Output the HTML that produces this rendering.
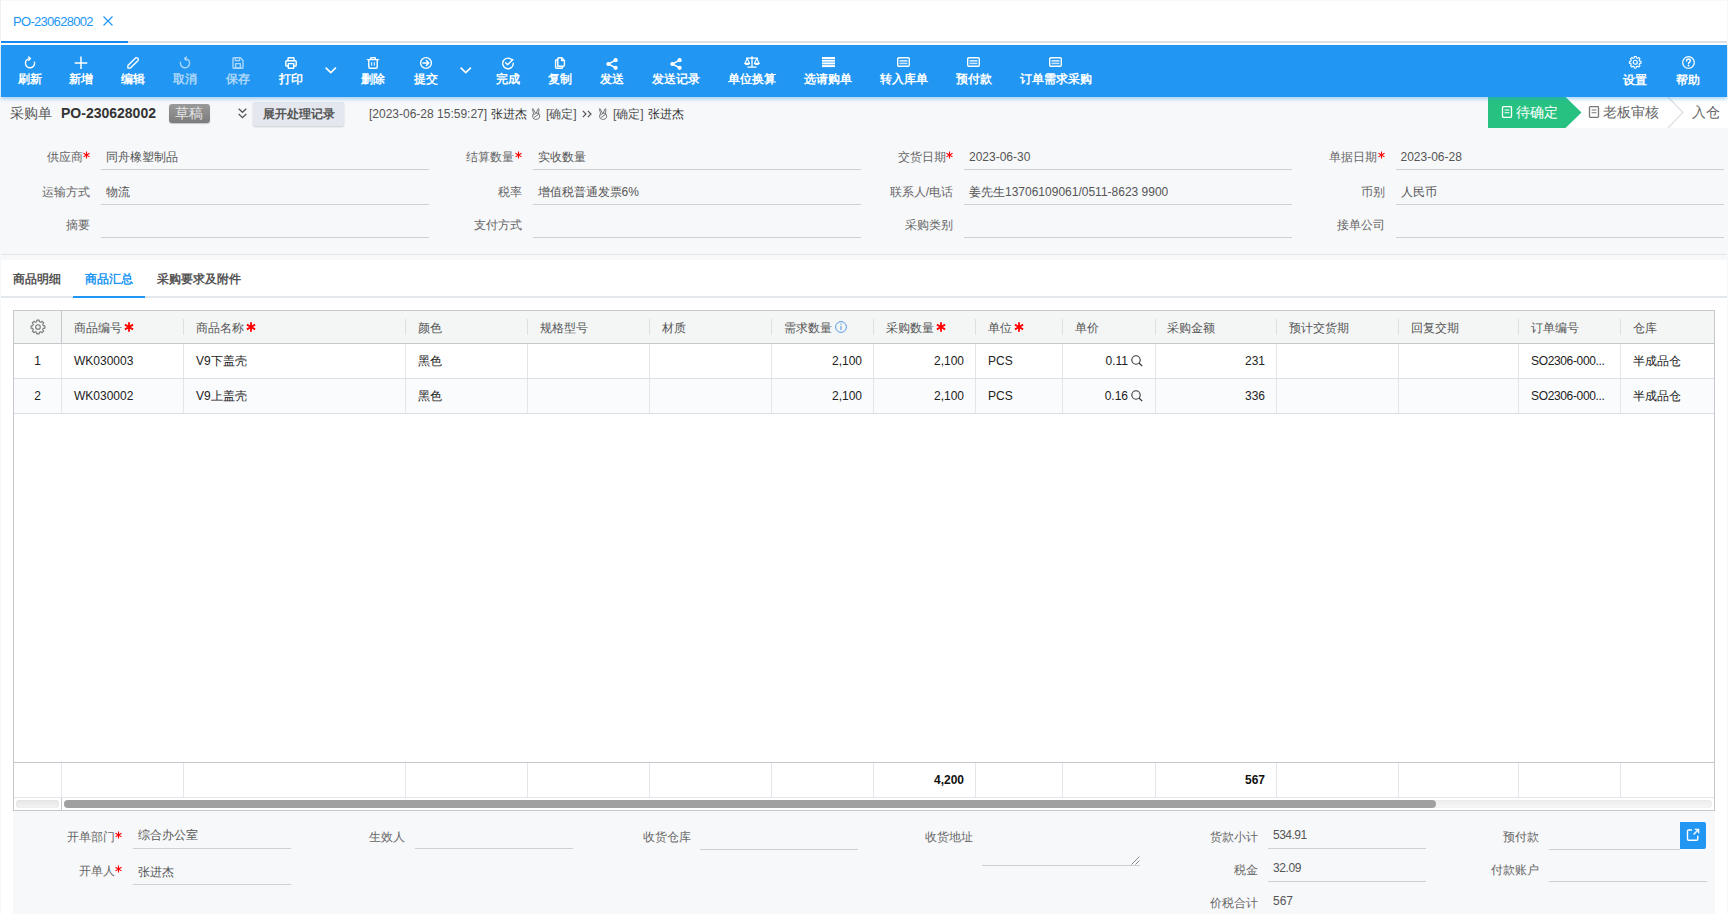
<!DOCTYPE html>
<html><head><meta charset="utf-8">
<style>
*{box-sizing:border-box}
html,body{margin:0;padding:0}
body{width:1728px;height:914px;overflow:hidden;background:#fff;font-family:"Liberation Sans",sans-serif;position:relative;color:#333}
.a{position:absolute;white-space:nowrap}
.t12{font-size:12px;line-height:12px}
.t14{font-size:14px;line-height:14px}
/* toolbar */
#tb{position:absolute;z-index:5;left:1px;top:45px;width:1726px;height:52px;background:#2196f3;box-shadow:0 2px 4px rgba(33,150,243,.4)}
.btn{position:absolute;top:0;height:52px;width:0}
.btn svg{position:absolute;left:-7px;top:11px;width:14px;height:14px;overflow:visible}
.btn span{position:absolute;top:28px;left:-50px;width:100px;text-align:center;font-size:12px;line-height:12px;color:#fff;font-weight:bold}
.dim{opacity:.62}
.st{display:inline-block;vertical-align:top;margin-left:0.5px}
</style></head>
<body>
<!-- tab bar -->
<div class="a" style="left:0;top:0;width:1px;height:41px;background:#eef0f3"></div>
<div class="a" style="left:13px;top:15px;font-size:13px;line-height:13px;letter-spacing:-0.7px;color:#2196f3">PO-230628002</div>
<svg class="a" style="left:103px;top:16px" width="10" height="10" viewBox="0 0 10 10"><path d="M0.5 0.5 L9.5 9.5 M9.5 0.5 L0.5 9.5" stroke="#2196f3" stroke-width="1.2" fill="none"/></svg>
<div class="a" style="left:1px;top:41px;width:1726px;height:2px;background:#dcdfe4"></div>
<div class="a" style="left:1px;top:41px;width:127px;height:2px;background:#1589f0"></div>

<!-- toolbar -->
<div id="tb">
<div class="btn " style="left:28.9px"><svg style="left:-6.0px;top:12.0px;width:12px;height:12px" viewBox="0 0 12 12"><path d="M6 1.6 A4.6 4.6 0 1 0 10.5 5.2" stroke="#fff" fill="none" stroke-width="1.4" stroke-linecap="round" stroke-linejoin="round"/><path d="M4.6 0 L6.4 1.6 L4.8 3.3" stroke="#fff" fill="none" stroke-width="1.4" stroke-linecap="round" stroke-linejoin="round"/></svg><span>刷新</span></div>
<div class="btn " style="left:80.2px"><svg style="left:-6.0px;top:12.0px;width:12px;height:12px" viewBox="0 0 12 12"><path d="M6 -0.4 V12 M-0.3 6 H12.3" stroke="#fff" stroke-width="1.5" fill="none"/></svg><span>新增</span></div>
<div class="btn " style="left:132.3px"><svg style="left:-6.0px;top:12.0px;width:12px;height:12px" viewBox="0 0 12 12"><path d="M8.6 0.9 Q9.6 0.2 10.8 1.2 Q11.8 2.4 11.1 3.4 L3.4 11.1 L0.9 11.1 L0.9 8.6 Z" stroke="#fff" fill="none" stroke-width="1.4" stroke-linecap="round" stroke-linejoin="round"/></svg><span>编辑</span></div>
<div class="btn dim" style="left:184.3px"><svg style="left:-6.0px;top:12.0px;width:12px;height:12px" viewBox="0 0 12 12"><path d="M6 1.6 A4.6 4.6 0 1 1 1.5 5.2" stroke="#fff" fill="none" stroke-width="1.4" stroke-linecap="round" stroke-linejoin="round"/><path d="M7.4 0 L5.6 1.6 L7.2 3.3" stroke="#fff" fill="none" stroke-width="1.4" stroke-linecap="round" stroke-linejoin="round"/></svg><span>取消</span></div>
<div class="btn dim" style="left:236.5px"><svg style="left:-6.0px;top:12.0px;width:12px;height:12px" viewBox="0 0 12 12"><path d="M1 1.6 Q1 0.8 1.8 0.8 H8.4 L11 3.4 V10.4 Q11 11.2 10.2 11.2 H1.8 Q1 11.2 1 10.4 Z" stroke="#fff" fill="none" stroke-width="1.4" stroke-linecap="round" stroke-linejoin="round"/><path d="M3.4 1 V3.6 H7.6 V1" stroke="#fff" fill="none" stroke-width="1.4" stroke-linecap="round" stroke-linejoin="round" stroke-width="1.1"/><rect x="3.6" y="6.6" width="4.8" height="4.4" stroke="#fff" fill="none" stroke-width="1.4" stroke-linecap="round" stroke-linejoin="round" stroke-width="1.2"/></svg><span>保存</span></div>
<div class="btn " style="left:289.7px"><svg style="left:-6.0px;top:12.0px;width:12px;height:12px" viewBox="0 0 12 12"><path d="M3 3.6 V1.4 Q3 0.8 3.6 0.8 H8.4 Q9 0.8 9 1.4 V3.6" stroke="#fff" fill="none" stroke-width="1.4" stroke-linecap="round" stroke-linejoin="round"/><path d="M3 9 H1.6 Q0.8 9 0.8 8.2 V4.6 Q0.8 3.7 1.7 3.7 H10.3 Q11.2 3.7 11.2 4.6 V8.2 Q11.2 9 10.4 9 H9" stroke="#fff" fill="none" stroke-width="1.4" stroke-linecap="round" stroke-linejoin="round"/><rect x="3.3" y="6.6" width="5.4" height="4.6" stroke="#fff" fill="none" stroke-width="1.4" stroke-linecap="round" stroke-linejoin="round"/></svg><span>打印</span></div>
<div class="btn " style="left:329.3px"><svg style="left:-5.75px;top:14.75px;width:11.5px;height:6.5px;top:21.5px" viewBox="0 0 11.5 6.5"><path d="M0.6 0.7 L5.75 5.6 L10.9 0.7" stroke="#fff" stroke-width="1.6" fill="none"/></svg></div>
<div class="btn " style="left:371.7px"><svg style="left:-6.0px;top:12.0px;width:12px;height:12px" viewBox="0 0 12 12"><path d="M0.4 2.6 H11.6" stroke="#fff" fill="none" stroke-width="1.4" stroke-linecap="round" stroke-linejoin="round"/><path d="M3.6 2.4 V1.4 Q3.6 0.8 4.2 0.8 H7.8 Q8.4 0.8 8.4 1.4 V2.4" stroke="#fff" fill="none" stroke-width="1.4" stroke-linecap="round" stroke-linejoin="round"/><path d="M1.8 2.8 V10 Q1.8 11.2 3 11.2 H9 Q10.2 11.2 10.2 10 V2.8" stroke="#fff" fill="none" stroke-width="1.4" stroke-linecap="round" stroke-linejoin="round"/><path d="M4.7 5.2 V8.6 M7.3 5.2 V8.6" stroke="#fff" fill="none" stroke-width="1"/></svg><span>删除</span></div>
<div class="btn " style="left:425.2px"><svg style="left:-6.0px;top:12.0px;width:12px;height:12px" viewBox="0 0 12 12"><circle cx="6" cy="6" r="5.4" stroke="#fff" fill="none" stroke-width="1.4" stroke-linecap="round" stroke-linejoin="round"/><path d="M3 6 H8.6 M6.4 3.6 L8.8 6 L6.4 8.4" stroke="#fff" fill="none" stroke-width="1.4" stroke-linecap="round" stroke-linejoin="round"/></svg><span>提交</span></div>
<div class="btn " style="left:464.5px"><svg style="left:-5.75px;top:14.75px;width:11.5px;height:6.5px;top:21.5px" viewBox="0 0 11.5 6.5"><path d="M0.6 0.7 L5.75 5.6 L10.9 0.7" stroke="#fff" stroke-width="1.6" fill="none"/></svg></div>
<div class="btn " style="left:507px"><svg style="left:-6.0px;top:12.0px;width:12px;height:12px" viewBox="0 0 12 12"><path d="M10.2 3.2 A5.3 5.3 0 1 0 11.3 6.3" stroke="#fff" fill="none" stroke-width="1.4" stroke-linecap="round" stroke-linejoin="round"/><path d="M3.6 5.8 L5.6 7.8 L10.8 2.4" stroke="#fff" fill="none" stroke-width="1.4" stroke-linecap="round" stroke-linejoin="round"/></svg><span>完成</span></div>
<div class="btn " style="left:558.7px"><svg style="left:-6.0px;top:12.0px;width:12px;height:12px" viewBox="0 0 12 12"><path d="M3.8 9.2 V2 Q3.8 0.8 5 0.8 H7.8 L10.4 3.4 V8 Q10.4 9.2 9.2 9.2 Z" stroke="#fff" fill="none" stroke-width="1.4" stroke-linecap="round" stroke-linejoin="round"/><path d="M7.6 1 V3.6 H10.2" stroke="#fff" fill="none" stroke-width="1.4" stroke-linecap="round" stroke-linejoin="round" stroke-width="1.1"/><path d="M3.6 2.8 H2.6 Q1.6 2.8 1.6 3.8 V10.2 Q1.6 11.2 2.6 11.2 H7.6 Q8.6 11.2 8.6 10.2 V9.4" stroke="#fff" fill="none" stroke-width="1.4" stroke-linecap="round" stroke-linejoin="round"/></svg><span>复制</span></div>
<div class="btn " style="left:611px"><svg style="left:-6.0px;top:12.0px;width:12px;height:12px;top:12.5px" viewBox="0 0 12 12"><path d="M9.6 2.2 L2.4 6 L9.6 9.8" stroke="#fff" stroke-width="1.5" fill="none"/><circle cx="9.6" cy="2.2" r="2.1" fill="#fff"/><circle cx="2.4" cy="6" r="2.1" fill="#fff"/><circle cx="9.6" cy="9.8" r="2.1" fill="#fff"/></svg><span>发送</span></div>
<div class="btn " style="left:675px"><svg style="left:-6.0px;top:12.0px;width:12px;height:12px;top:12.5px" viewBox="0 0 12 12"><path d="M9.6 2.2 L2.4 6 L9.6 9.8" stroke="#fff" stroke-width="1.5" fill="none"/><circle cx="9.6" cy="2.2" r="2.1" fill="#fff"/><circle cx="2.4" cy="6" r="2.1" fill="#fff"/><circle cx="9.6" cy="9.8" r="2.1" fill="#fff"/></svg><span>发送记录</span></div>
<div class="btn " style="left:751px"><svg style="left:-8.0px;top:11px;width:16px;height:12px" viewBox="0 0 16 12"><path d="M8 0.8 V11.2 M3.5 11.2 H12.5 M2 2.2 H14" stroke="#fff" stroke-width="1.3" fill="none"/><path d="M3.2 2.4 L0.8 7.4 H5.6 Z M12.8 2.4 L10.4 7.4 H15.2 Z" stroke="#fff" stroke-width="1.1" fill="none" stroke-linejoin="round"/><path d="M0.6 7.4 Q3.2 10 5.8 7.4 M10.2 7.4 Q12.8 10 15.4 7.4" stroke="#fff" stroke-width="1.3" fill="#fff"/><circle cx="8" cy="1.4" r="1" fill="#fff"/></svg><span>单位换算</span></div>
<div class="btn " style="left:827px"><svg style="left:-6.5px;top:13.0px;width:13px;height:10px;top:12px" viewBox="0 0 13 10"><rect x="0" y="0" width="13" height="2" fill="#fff"/><rect x="0" y="2.7" width="13" height="2" fill="#fff"/><rect x="0" y="5.4" width="13" height="2" fill="#fff"/><rect x="0" y="8.1" width="13" height="2" fill="#fff"/></svg><span>选请购单</span></div>
<div class="btn " style="left:902.8px"><svg style="left:-6.5px;top:13.0px;width:13px;height:10px;top:12px" viewBox="0 0 13 10"><rect x="0.7" y="0.7" width="11.6" height="8.6" rx="1.2" stroke="#fff" stroke-width="1.4" fill="none"/><rect x="2.5" y="3.2" width="8" height="1.3" fill="#fff"/><rect x="2.5" y="5.6" width="8" height="1.6" fill="#fff" opacity=".75"/></svg><span>转入库单</span></div>
<div class="btn " style="left:972.9px"><svg style="left:-6.5px;top:13.0px;width:13px;height:10px;top:12px" viewBox="0 0 13 10"><rect x="0.7" y="0.7" width="11.6" height="8.6" rx="1.2" stroke="#fff" stroke-width="1.4" fill="none"/><rect x="2.5" y="3.2" width="8" height="1.3" fill="#fff"/><rect x="2.5" y="5.6" width="8" height="1.6" fill="#fff" opacity=".75"/></svg><span>预付款</span></div>
<div class="btn " style="left:1054.6px"><svg style="left:-6.5px;top:13.0px;width:13px;height:10px;top:12px" viewBox="0 0 13 10"><rect x="0.7" y="0.7" width="11.6" height="8.6" rx="1.2" stroke="#fff" stroke-width="1.4" fill="none"/><rect x="2.5" y="3.2" width="8" height="1.3" fill="#fff"/><rect x="2.5" y="5.6" width="8" height="1.6" fill="#fff" opacity=".75"/></svg><span>订单需求采购</span></div>
<div class="btn " style="left:1634.2px"><svg style="left:-6.25px;top:11.2px;width:12.5px;height:12.5px" viewBox="0 0 12.5 12.5"><path d="M5.10 1.90 L5.28 0.43 L7.22 0.43 L7.40 1.90 L8.51 2.36 L9.68 1.45 L11.05 2.82 L10.14 3.99 L10.60 5.10 L12.07 5.28 L12.07 7.22 L10.60 7.40 L10.14 8.51 L11.05 9.68 L9.68 11.05 L8.51 10.14 L7.40 10.60 L7.22 12.07 L5.28 12.07 L5.10 10.60 L3.99 10.14 L2.82 11.05 L1.45 9.68 L2.36 8.51 L1.90 7.40 L0.43 7.22 L0.43 5.28 L1.90 5.10 L2.36 3.99 L1.45 2.82 L2.82 1.45 L3.99 2.36 Z" stroke="#fff" stroke-width="1.1" fill="none" stroke-linejoin="round"/><circle cx="6.25" cy="6.25" r="2" stroke="#fff" stroke-width="1.2" fill="none"/></svg><span style="top:29px">设置</span></div>
<div class="btn " style="left:1687.3px"><svg style="left:-6.5px;top:10.5px;width:13px;height:13px" viewBox="0 0 13 13"><circle cx="6.5" cy="6.5" r="5.8" stroke="#fff" stroke-width="1.3" fill="none"/><path d="M4.6 5 Q4.6 3.1 6.5 3.1 Q8.4 3.1 8.4 4.8 Q8.4 5.9 7.3 6.4 Q6.5 6.8 6.5 7.8" stroke="#fff" stroke-width="1.5" fill="none" stroke-linecap="round"/><circle cx="6.5" cy="9.7" r="0.9" fill="#fff"/></svg><span style="top:29px">帮助</span></div>
</div>

<div class="a" style="left:0;top:0;width:1728px;height:914px;background:#f7f8fa;z-index:-2"></div>
<div class="a" style="left:1px;top:1px;width:1726px;height:44px;background:#fff;z-index:-1"></div>
<div class="a" style="left:1px;top:260px;width:1726px;height:654px;background:#fff;z-index:-1"></div>
<div class="a t14" style="left:10px;top:106px;color:#555">采购单</div>
<div class="a t14" style="left:61px;top:106px;color:#333;font-weight:bold">PO-230628002</div>
<div class="a" style="left:169px;top:104px;width:41px;height:19px;border-radius:3px;background:linear-gradient(#9a9a9a,#7c7c7c);box-shadow:0 1px 1px rgba(0,0,0,.2)"></div>
<div class="a t14" style="left:175px;top:106px;color:#e6e6e6">草稿</div>
<svg class="a" style="left:238px;top:108px" width="9" height="11" viewBox="0 0 9 11"><path d="M0.7 0.8 L4.5 4.3 L8.3 0.8 M0.7 6 L4.5 9.6 L8.3 6" stroke="#555" stroke-width="1.3" fill="none"/></svg>
<div class="a" style="left:253px;top:102px;width:91px;height:24px;border-radius:2px;background:#e4e7ed;box-shadow:0 1px 2px rgba(0,0,0,.18)"></div>
<div class="a t12" style="left:263px;top:108px;color:#555;font-weight:bold">展开处理记录</div>
<div class="a t12" style="left:369px;top:108px;color:#555">[2023-06-28 15:59:27]</div>
<div class="a t12" style="left:491px;top:108px;color:#333">张进杰</div>
<svg class="a" style="left:531px;top:108px" width="10" height="12" viewBox="0 0 10 12"><path d="M2.6 5.4 L1.4 1.2 Q1.4 0.5 2.1 0.8 L4.4 5 M5.4 4.8 L7 0.9 Q7.6 0.4 7.9 1.1 L7.6 5.6 M2.2 5.8 Q0.6 8.6 2.4 10.6 Q4.6 12.2 7.4 10.8 Q9.4 9.2 8.4 6.6 Q7.6 5 5.6 5.2 Q3.6 5.4 2.4 7.2 M3.4 9.2 L7.6 6.4" stroke="#6a6a6a" stroke-width="0.9" fill="none" stroke-linecap="round" stroke-linejoin="round"/></svg>
<div class="a t12" style="left:546px;top:108px;color:#555">[确定]</div>
<svg class="a" style="left:582px;top:110px" width="10" height="8" viewBox="0 0 10 8"><path d="M0.8 0.8 L4 4 L0.8 7.2 M5.8 0.8 L9 4 L5.8 7.2" stroke="#555" stroke-width="1.2" fill="none"/></svg>
<svg class="a" style="left:598px;top:108px" width="10" height="12" viewBox="0 0 10 12"><path d="M2.6 5.4 L1.4 1.2 Q1.4 0.5 2.1 0.8 L4.4 5 M5.4 4.8 L7 0.9 Q7.6 0.4 7.9 1.1 L7.6 5.6 M2.2 5.8 Q0.6 8.6 2.4 10.6 Q4.6 12.2 7.4 10.8 Q9.4 9.2 8.4 6.6 Q7.6 5 5.6 5.2 Q3.6 5.4 2.4 7.2 M3.4 9.2 L7.6 6.4" stroke="#6a6a6a" stroke-width="0.9" fill="none" stroke-linecap="round" stroke-linejoin="round"/></svg>
<div class="a t12" style="left:613px;top:108px;color:#555">[确定]</div>
<div class="a t12" style="left:648px;top:108px;color:#333">张进杰</div>
<div class="a" style="left:1565px;top:97px;width:163px;height:31px;background:#fff"></div>
<svg class="a" style="left:1488px;top:97px" width="94" height="31" viewBox="0 0 94 31"><path d="M0 0 H77.5 L93.5 15.5 L77.5 31 H0 Z" fill="#27c281"/></svg>
<svg class="a" style="left:1501px;top:106px" width="12" height="12" viewBox="0 0 12 12"><rect x="1.5" y="0.7" width="9" height="10.6" rx="0.8" stroke="#fff" stroke-width="1.3" fill="none"/><path d="M3.6 4 H8.4 M3.6 6.8 H8.4" stroke="#fff" stroke-width="1.1"/></svg>
<div class="a t14" style="left:1516px;top:105px;color:#fff">待确定</div>
<svg class="a" style="left:1588px;top:106px" width="12" height="12" viewBox="0 0 12 12"><rect x="1.5" y="0.7" width="9" height="10.6" rx="0.8" stroke="#777" stroke-width="1.3" fill="none"/><path d="M3.6 4 H8.4 M3.6 6.8 H8.4" stroke="#777" stroke-width="1.1"/></svg>
<div class="a t14" style="left:1603px;top:105px;color:#666">老板审核</div>
<svg class="a" style="left:1667px;top:97px" width="18" height="31" viewBox="0 0 18 31"><path d="M1 0 L16 15.5 L1 31" stroke="#dcdfe6" stroke-width="1.2" fill="none"/></svg>
<div class="a t14" style="left:1692px;top:105px;color:#666">入仓</div>
<div class="a t12" style="left:-199px;width:289px;text-align:right;top:151px;color:#666">供应商<svg class="st" width="7" height="12" viewBox="0 0 7 12"><path d="M3.5 0.6 V7.6 M0.5 2.3 L6.5 5.9 M0.5 5.9 L6.5 2.3" stroke="#f00" stroke-width="1.1" fill="none"/></svg></div>
<div class="a" style="left:101px;top:169px;width:328px;height:1px;background:#ccd1d8"></div>
<div class="a t12" style="left:106px;top:151px;color:#555">同舟橡塑制品</div>
<div class="a t12" style="left:-199px;width:289px;text-align:right;top:186px;color:#666">运输方式</div>
<div class="a" style="left:101px;top:204px;width:328px;height:1px;background:#ccd1d8"></div>
<div class="a t12" style="left:106px;top:186px;color:#555">物流</div>
<div class="a t12" style="left:-199px;width:289px;text-align:right;top:219px;color:#666">摘要</div>
<div class="a" style="left:101px;top:237px;width:328px;height:1px;background:#ccd1d8"></div>
<div class="a t12" style="left:232.5px;width:289px;text-align:right;top:151px;color:#666">结算数量<svg class="st" width="7" height="12" viewBox="0 0 7 12"><path d="M3.5 0.6 V7.6 M0.5 2.3 L6.5 5.9 M0.5 5.9 L6.5 2.3" stroke="#f00" stroke-width="1.1" fill="none"/></svg></div>
<div class="a" style="left:532.5px;top:169px;width:328px;height:1px;background:#ccd1d8"></div>
<div class="a t12" style="left:537.5px;top:151px;color:#555">实收数量</div>
<div class="a t12" style="left:232.5px;width:289px;text-align:right;top:186px;color:#666">税率</div>
<div class="a" style="left:532.5px;top:204px;width:328px;height:1px;background:#ccd1d8"></div>
<div class="a t12" style="left:537.5px;top:186px;color:#555">增值税普通发票6%</div>
<div class="a t12" style="left:232.5px;width:289px;text-align:right;top:219px;color:#666">支付方式</div>
<div class="a" style="left:532.5px;top:237px;width:328px;height:1px;background:#ccd1d8"></div>
<div class="a t12" style="left:664px;width:289px;text-align:right;top:151px;color:#666">交货日期<svg class="st" width="7" height="12" viewBox="0 0 7 12"><path d="M3.5 0.6 V7.6 M0.5 2.3 L6.5 5.9 M0.5 5.9 L6.5 2.3" stroke="#f00" stroke-width="1.1" fill="none"/></svg></div>
<div class="a" style="left:964px;top:169px;width:328px;height:1px;background:#ccd1d8"></div>
<div class="a t12" style="left:969px;top:151px;color:#555">2023-06-30</div>
<div class="a t12" style="left:664px;width:289px;text-align:right;top:186px;color:#666">联系人/电话</div>
<div class="a" style="left:964px;top:204px;width:328px;height:1px;background:#ccd1d8"></div>
<div class="a t12" style="left:969px;top:186px;color:#555">姜先生13706109061/0511-8623 9900</div>
<div class="a t12" style="left:664px;width:289px;text-align:right;top:219px;color:#666">采购类别</div>
<div class="a" style="left:964px;top:237px;width:328px;height:1px;background:#ccd1d8"></div>
<div class="a t12" style="left:1095.5px;width:289px;text-align:right;top:151px;color:#666">单据日期<svg class="st" width="7" height="12" viewBox="0 0 7 12"><path d="M3.5 0.6 V7.6 M0.5 2.3 L6.5 5.9 M0.5 5.9 L6.5 2.3" stroke="#f00" stroke-width="1.1" fill="none"/></svg></div>
<div class="a" style="left:1395.5px;top:169px;width:328px;height:1px;background:#ccd1d8"></div>
<div class="a t12" style="left:1400.5px;top:151px;color:#555">2023-06-28</div>
<div class="a t12" style="left:1095.5px;width:289px;text-align:right;top:186px;color:#666">币别</div>
<div class="a" style="left:1395.5px;top:204px;width:328px;height:1px;background:#ccd1d8"></div>
<div class="a t12" style="left:1400.5px;top:186px;color:#555">人民币</div>
<div class="a t12" style="left:1095.5px;width:289px;text-align:right;top:219px;color:#666">接单公司</div>
<div class="a" style="left:1395.5px;top:237px;width:328px;height:1px;background:#ccd1d8"></div>
<div class="a" style="left:1px;top:254px;width:1726px;height:1px;background:#e2e5e9"></div>
<div class="a t12" style="left:13px;top:273px;color:#555;font-weight:bold">商品明细</div>
<div class="a t12" style="left:85px;top:273px;color:#2196f3;font-weight:bold">商品汇总</div>
<div class="a t12" style="left:157px;top:273px;color:#555;font-weight:bold">采购要求及附件</div>
<div class="a" style="left:1px;top:296px;width:1726px;height:2px;background:#e4e7ec"></div>
<div class="a" style="left:73px;top:296px;width:72px;height:2px;background:#2196f3"></div>
<div class="a" style="left:13px;top:310px;width:1702px;height:501px;border:1px solid #c5c9ce;background:#fff"></div>
<div class="a" style="left:14px;top:311px;width:1700px;height:32px;background:#f4f6f6"></div>
<div class="a" style="left:14px;top:343px;width:1700px;height:1px;background:#c5c9ce"></div>
<div class="a" style="left:61px;top:311px;width:1px;height:32px;background:#c5c9ce"></div>
<div class="a" style="left:183px;top:319px;width:1px;height:16px;background:#dcdfe4"></div>
<div class="a" style="left:405px;top:319px;width:1px;height:16px;background:#dcdfe4"></div>
<div class="a" style="left:527px;top:319px;width:1px;height:16px;background:#dcdfe4"></div>
<div class="a" style="left:649px;top:319px;width:1px;height:16px;background:#dcdfe4"></div>
<div class="a" style="left:771px;top:319px;width:1px;height:16px;background:#dcdfe4"></div>
<div class="a" style="left:873px;top:319px;width:1px;height:16px;background:#dcdfe4"></div>
<div class="a" style="left:975px;top:319px;width:1px;height:16px;background:#dcdfe4"></div>
<div class="a" style="left:1062px;top:319px;width:1px;height:16px;background:#dcdfe4"></div>
<div class="a" style="left:1155px;top:319px;width:1px;height:16px;background:#dcdfe4"></div>
<div class="a" style="left:1276px;top:319px;width:1px;height:16px;background:#dcdfe4"></div>
<div class="a" style="left:1398px;top:319px;width:1px;height:16px;background:#dcdfe4"></div>
<div class="a" style="left:1518px;top:319px;width:1px;height:16px;background:#dcdfe4"></div>
<div class="a" style="left:1620px;top:319px;width:1px;height:16px;background:#dcdfe4"></div>
<svg class="a" style="left:30px;top:319px" width="16" height="16" viewBox="0 0 16 16"><path d="M6.62 2.78 L6.85 1.09 L9.15 1.09 L9.38 2.78 L10.71 3.33 L12.07 2.30 L13.70 3.93 L12.67 5.29 L13.22 6.62 L14.91 6.85 L14.91 9.15 L13.22 9.38 L12.67 10.71 L13.70 12.07 L12.07 13.70 L10.71 12.67 L9.38 13.22 L9.15 14.91 L6.85 14.91 L6.62 13.22 L5.29 12.67 L3.93 13.70 L2.30 12.07 L3.33 10.71 L2.78 9.38 L1.09 9.15 L1.09 6.85 L2.78 6.62 L3.33 5.29 L2.30 3.93 L3.93 2.30 L5.29 3.33 Z" stroke="#777" stroke-width="1.1" fill="none" stroke-linejoin="round"/><circle cx="8" cy="8" r="2.3" stroke="#777" stroke-width="1.1" fill="none"/></svg>
<div class="a t12" style="left:74px;top:322px;color:#555">商品编号</div>
<svg class="a" style="left:124px;top:322px" width="10" height="10" viewBox="0 0 10 10"><path d="M5 0.3 V9.7 M0.9 2.6 L9.1 7.4 M0.9 7.4 L9.1 2.6" stroke="#f00" stroke-width="1.8" fill="none"/></svg>
<div class="a t12" style="left:196px;top:322px;color:#555">商品名称</div>
<svg class="a" style="left:246px;top:322px" width="10" height="10" viewBox="0 0 10 10"><path d="M5 0.3 V9.7 M0.9 2.6 L9.1 7.4 M0.9 7.4 L9.1 2.6" stroke="#f00" stroke-width="1.8" fill="none"/></svg>
<div class="a t12" style="left:418px;top:322px;color:#555">颜色</div>
<div class="a t12" style="left:540px;top:322px;color:#555">规格型号</div>
<div class="a t12" style="left:662px;top:322px;color:#555">材质</div>
<div class="a t12" style="left:784px;top:322px;color:#555">需求数量</div>
<div class="a t12" style="left:886px;top:322px;color:#555">采购数量</div>
<svg class="a" style="left:936px;top:322px" width="10" height="10" viewBox="0 0 10 10"><path d="M5 0.3 V9.7 M0.9 2.6 L9.1 7.4 M0.9 7.4 L9.1 2.6" stroke="#f00" stroke-width="1.8" fill="none"/></svg>
<div class="a t12" style="left:988px;top:322px;color:#555">单位</div>
<svg class="a" style="left:1014px;top:322px" width="10" height="10" viewBox="0 0 10 10"><path d="M5 0.3 V9.7 M0.9 2.6 L9.1 7.4 M0.9 7.4 L9.1 2.6" stroke="#f00" stroke-width="1.8" fill="none"/></svg>
<div class="a t12" style="left:1075px;top:322px;color:#555">单价</div>
<div class="a t12" style="left:1167px;top:322px;color:#555">采购金额</div>
<div class="a t12" style="left:1289px;top:322px;color:#555">预计交货期</div>
<div class="a t12" style="left:1411px;top:322px;color:#555">回复交期</div>
<div class="a t12" style="left:1531px;top:322px;color:#555">订单编号</div>
<div class="a t12" style="left:1633px;top:322px;color:#555">仓库</div>
<svg class="a" style="left:835px;top:321px" width="12" height="12" viewBox="0 0 12 12"><circle cx="6" cy="6" r="5.4" stroke="#5a9ae6" stroke-width="1" fill="none"/><path d="M6 5 V9" stroke="#5a9ae6" stroke-width="1.1"/><circle cx="6" cy="3.3" r="0.7" fill="#5a9ae6"/></svg>
<div class="a" style="left:14px;top:378px;width:1700px;height:1px;background:#dcdfe4"></div>
<div class="a" style="left:61px;top:344px;width:1px;height:34px;background:#e3e6ea"></div>
<div class="a" style="left:183px;top:344px;width:1px;height:34px;background:#e3e6ea"></div>
<div class="a" style="left:405px;top:344px;width:1px;height:34px;background:#e3e6ea"></div>
<div class="a" style="left:527px;top:344px;width:1px;height:34px;background:#e3e6ea"></div>
<div class="a" style="left:649px;top:344px;width:1px;height:34px;background:#e3e6ea"></div>
<div class="a" style="left:771px;top:344px;width:1px;height:34px;background:#e3e6ea"></div>
<div class="a" style="left:873px;top:344px;width:1px;height:34px;background:#e3e6ea"></div>
<div class="a" style="left:975px;top:344px;width:1px;height:34px;background:#e3e6ea"></div>
<div class="a" style="left:1062px;top:344px;width:1px;height:34px;background:#e3e6ea"></div>
<div class="a" style="left:1155px;top:344px;width:1px;height:34px;background:#e3e6ea"></div>
<div class="a" style="left:1276px;top:344px;width:1px;height:34px;background:#e3e6ea"></div>
<div class="a" style="left:1398px;top:344px;width:1px;height:34px;background:#e3e6ea"></div>
<div class="a" style="left:1518px;top:344px;width:1px;height:34px;background:#e3e6ea"></div>
<div class="a" style="left:1620px;top:344px;width:1px;height:34px;background:#e3e6ea"></div>
<div class="a" style="left:14px;top:379px;width:1700px;height:34px;background:#fafbfd"></div>
<div class="a" style="left:14px;top:413px;width:1700px;height:1px;background:#dcdfe4"></div>
<div class="a" style="left:61px;top:379px;width:1px;height:34px;background:#e3e6ea"></div>
<div class="a" style="left:183px;top:379px;width:1px;height:34px;background:#e3e6ea"></div>
<div class="a" style="left:405px;top:379px;width:1px;height:34px;background:#e3e6ea"></div>
<div class="a" style="left:527px;top:379px;width:1px;height:34px;background:#e3e6ea"></div>
<div class="a" style="left:649px;top:379px;width:1px;height:34px;background:#e3e6ea"></div>
<div class="a" style="left:771px;top:379px;width:1px;height:34px;background:#e3e6ea"></div>
<div class="a" style="left:873px;top:379px;width:1px;height:34px;background:#e3e6ea"></div>
<div class="a" style="left:975px;top:379px;width:1px;height:34px;background:#e3e6ea"></div>
<div class="a" style="left:1062px;top:379px;width:1px;height:34px;background:#e3e6ea"></div>
<div class="a" style="left:1155px;top:379px;width:1px;height:34px;background:#e3e6ea"></div>
<div class="a" style="left:1276px;top:379px;width:1px;height:34px;background:#e3e6ea"></div>
<div class="a" style="left:1398px;top:379px;width:1px;height:34px;background:#e3e6ea"></div>
<div class="a" style="left:1518px;top:379px;width:1px;height:34px;background:#e3e6ea"></div>
<div class="a" style="left:1620px;top:379px;width:1px;height:34px;background:#e3e6ea"></div>
<div class="a t12" style="left:13px;width:49px;text-align:center;top:355px;color:#222">1</div>
<div class="a t12" style="left:74px;top:355px;color:#222">WK030003</div>
<div class="a t12" style="left:196px;top:355px;color:#222">V9下盖壳</div>
<div class="a t12" style="left:418px;top:355px;color:#222">黑色</div>
<div class="a t12" style="left:700px;width:162px;text-align:right;top:355px;color:#222">2,100</div>
<div class="a t12" style="left:800px;width:164px;text-align:right;top:355px;color:#222">2,100</div>
<div class="a t12" style="left:988px;top:355px;color:#222">PCS</div>
<div class="a t12" style="left:1000px;width:128px;text-align:right;top:355px;color:#222">0.11</div>
<svg class="a" style="left:1131px;top:355px" width="12" height="12" viewBox="0 0 12 12"><circle cx="5" cy="5" r="4.2" stroke="#333" stroke-width="1.1" fill="none"/><path d="M8 8 L11.2 11.2" stroke="#333" stroke-width="1.2"/></svg>
<div class="a t12" style="left:1100px;width:165px;text-align:right;top:355px;color:#222">231</div>
<div class="a t12" style="left:1531px;top:355px;color:#222;letter-spacing:-0.35px">SO2306-000...</div>
<div class="a t12" style="left:1633px;top:355px;color:#222">半成品仓</div>
<div class="a t12" style="left:13px;width:49px;text-align:center;top:390px;color:#222">2</div>
<div class="a t12" style="left:74px;top:390px;color:#222">WK030002</div>
<div class="a t12" style="left:196px;top:390px;color:#222">V9上盖壳</div>
<div class="a t12" style="left:418px;top:390px;color:#222">黑色</div>
<div class="a t12" style="left:700px;width:162px;text-align:right;top:390px;color:#222">2,100</div>
<div class="a t12" style="left:800px;width:164px;text-align:right;top:390px;color:#222">2,100</div>
<div class="a t12" style="left:988px;top:390px;color:#222">PCS</div>
<div class="a t12" style="left:1000px;width:128px;text-align:right;top:390px;color:#222">0.16</div>
<svg class="a" style="left:1131px;top:390px" width="12" height="12" viewBox="0 0 12 12"><circle cx="5" cy="5" r="4.2" stroke="#333" stroke-width="1.1" fill="none"/><path d="M8 8 L11.2 11.2" stroke="#333" stroke-width="1.2"/></svg>
<div class="a t12" style="left:1100px;width:165px;text-align:right;top:390px;color:#222">336</div>
<div class="a t12" style="left:1531px;top:390px;color:#222;letter-spacing:-0.35px">SO2306-000...</div>
<div class="a t12" style="left:1633px;top:390px;color:#222">半成品仓</div>
<div class="a" style="left:14px;top:762px;width:1700px;height:1px;background:#c5c9ce"></div>
<div class="a" style="left:14px;top:797px;width:1700px;height:1px;background:#e3e6ea"></div>
<div class="a" style="left:61px;top:763px;width:1px;height:34px;background:#e3e6ea"></div>
<div class="a" style="left:183px;top:763px;width:1px;height:34px;background:#e3e6ea"></div>
<div class="a" style="left:405px;top:763px;width:1px;height:34px;background:#e3e6ea"></div>
<div class="a" style="left:527px;top:763px;width:1px;height:34px;background:#e3e6ea"></div>
<div class="a" style="left:649px;top:763px;width:1px;height:34px;background:#e3e6ea"></div>
<div class="a" style="left:771px;top:763px;width:1px;height:34px;background:#e3e6ea"></div>
<div class="a" style="left:873px;top:763px;width:1px;height:34px;background:#e3e6ea"></div>
<div class="a" style="left:975px;top:763px;width:1px;height:34px;background:#e3e6ea"></div>
<div class="a" style="left:1062px;top:763px;width:1px;height:34px;background:#e3e6ea"></div>
<div class="a" style="left:1155px;top:763px;width:1px;height:34px;background:#e3e6ea"></div>
<div class="a" style="left:1276px;top:763px;width:1px;height:34px;background:#e3e6ea"></div>
<div class="a" style="left:1398px;top:763px;width:1px;height:34px;background:#e3e6ea"></div>
<div class="a" style="left:1518px;top:763px;width:1px;height:34px;background:#e3e6ea"></div>
<div class="a" style="left:1620px;top:763px;width:1px;height:34px;background:#e3e6ea"></div>
<div class="a" style="left:61px;top:798px;width:1px;height:12px;background:#c5c9ce"></div>
<div class="a t12" style="left:800px;width:164px;text-align:right;top:774px;color:#111;font-weight:bold">4,200</div>
<div class="a t12" style="left:1100px;width:165px;text-align:right;top:774px;color:#111;font-weight:bold">567</div>
<div class="a" style="left:16px;top:800px;width:43px;height:8px;border-radius:4px;background:linear-gradient(#e6e6e6,#f3f3f3);box-shadow:inset 0 0 1px rgba(0,0,0,.15)"></div>
<div class="a" style="left:64px;top:800px;width:1648px;height:8px;border-radius:4px;background:linear-gradient(#ececec,#f6f6f6);box-shadow:inset 0 0 1px rgba(0,0,0,.1)"></div>
<div class="a" style="left:64px;top:800px;width:1372px;height:8px;border-radius:4px;background:#a0a0a0"></div>
<div class="a" style="left:13px;top:811px;width:1702px;height:103px;background:#f7f8fa"></div>
<div class="a t12" style="left:-78px;width:200px;text-align:right;top:831px;color:#666">开单部门<svg class="st" width="7" height="12" viewBox="0 0 7 12"><path d="M3.5 0.6 V7.6 M0.5 2.3 L6.5 5.9 M0.5 5.9 L6.5 2.3" stroke="#f00" stroke-width="1.1" fill="none"/></svg></div>
<div class="a" style="left:133px;top:848px;width:158px;height:1px;background:#ccd1d8"></div>
<div class="a t12" style="left:138px;top:829px;color:#555">综合办公室</div>
<div class="a t12" style="left:-78px;width:200px;text-align:right;top:865px;color:#666">开单人<svg class="st" width="7" height="12" viewBox="0 0 7 12"><path d="M3.5 0.6 V7.6 M0.5 2.3 L6.5 5.9 M0.5 5.9 L6.5 2.3" stroke="#f00" stroke-width="1.1" fill="none"/></svg></div>
<div class="a" style="left:133px;top:884px;width:158px;height:1px;background:#ccd1d8"></div>
<div class="a t12" style="left:138px;top:866px;color:#555">张进杰</div>
<div class="a t12" style="left:205px;width:200px;text-align:right;top:831px;color:#666">生效人</div>
<div class="a" style="left:415px;top:848px;width:158px;height:1px;background:#ccd1d8"></div>
<div class="a t12" style="left:490.5px;width:200px;text-align:right;top:831px;color:#666">收货仓库</div>
<div class="a" style="left:700px;top:849px;width:158px;height:1px;background:#ccd1d8"></div>
<div class="a t12" style="left:772.5px;width:200px;text-align:right;top:831px;color:#666">收货地址</div>
<div class="a" style="left:982px;top:865px;width:158px;height:1px;background:#ccd1d8"></div>
<svg class="a" style="left:1131px;top:856px" width="9" height="9" viewBox="0 0 9 9"><path d="M0.5 8.5 L8.5 0.5 M4.5 8.5 L8.5 4.5" stroke="#888" stroke-width="1"/></svg>
<div class="a t12" style="left:1057.5px;width:200px;text-align:right;top:831px;color:#666">货款小计</div>
<div class="a" style="left:1268px;top:848px;width:158px;height:1px;background:#ccd1d8"></div>
<div class="a t12" style="left:1273px;top:829px;color:#555;letter-spacing:-0.5px">534.91</div>
<div class="a t12" style="left:1057.5px;width:200px;text-align:right;top:864px;color:#666">税金</div>
<div class="a" style="left:1268px;top:881px;width:158px;height:1px;background:#ccd1d8"></div>
<div class="a t12" style="left:1273px;top:862px;color:#555;letter-spacing:-0.4px">32.09</div>
<div class="a t12" style="left:1057.5px;width:200px;text-align:right;top:897px;color:#666">价税合计</div>
<div class="a t12" style="left:1273px;top:895px;color:#555">567</div>
<div class="a t12" style="left:1339px;width:200px;text-align:right;top:831px;color:#666">预付款</div>
<div class="a" style="left:1549px;top:849px;width:131px;height:1px;background:#ccd1d8"></div>
<div class="a t12" style="left:1339px;width:200px;text-align:right;top:864px;color:#666">付款账户</div>
<div class="a" style="left:1549px;top:881px;width:158px;height:1px;background:#ccd1d8"></div>
<div class="a" style="left:1680px;top:822px;width:26px;height:27px;border-radius:0 2px 2px 0;background:#2196f3"></div>
<svg class="a" style="left:1686px;top:828px" width="14" height="14" viewBox="0 0 14 14"><path d="M6 2 H2.6 Q1.5 2 1.5 3.1 V11 Q1.5 12.2 2.6 12.2 H10.6 Q11.8 12.2 11.8 11 V7.8" stroke="#fff" stroke-width="1.4" fill="none"/><path d="M7.6 6.4 L12.4 1.6 M8.8 1.4 H12.6 V5.2" stroke="#fff" stroke-width="1.4" fill="none"/></svg>
</body></html>
